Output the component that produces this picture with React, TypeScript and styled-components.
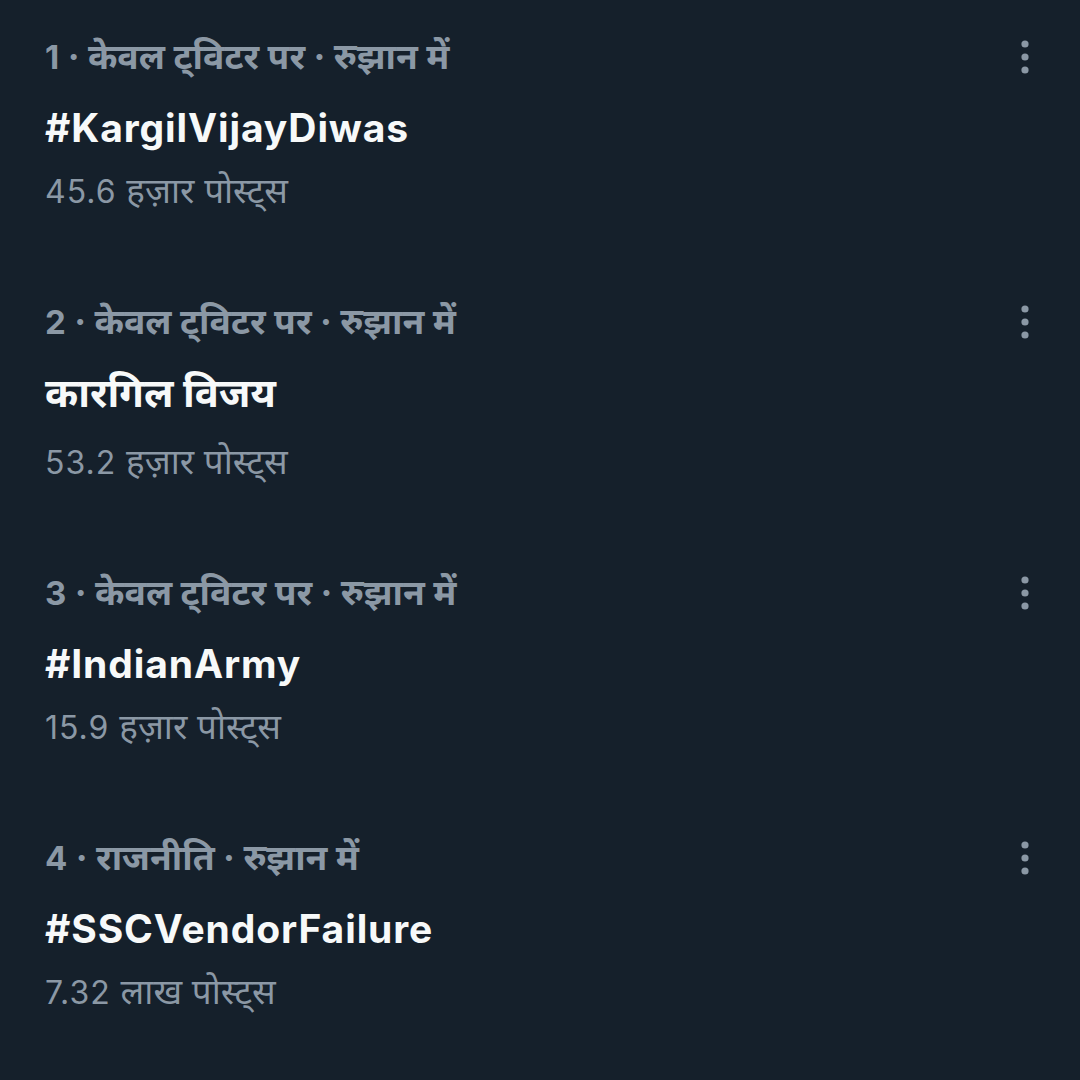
import React from "react";
import styled, { createGlobalStyle } from "styled-components";

const Global = createGlobalStyle`
  html, body { margin: 0; padding: 0; background: #15202b; }
  body { width: 1080px; height: 1080px; overflow: hidden; }
`;

const Page = styled.main`
  width: 1080px;
  height: 1080px;
  background: #15202b;
  display: flex;
  flex-direction: column;
  font-family: Inter, Roboto, "Noto Sans", "Noto Sans Devanagari", sans-serif;
`;

const Row = styled.section`
  display: flex;
  align-items: flex-start;
  justify-content: space-between;
  padding: 37px 43px 55px 45px;
`;

const Info = styled.div`
  display: flex;
  flex-direction: column;
`;

const Meta = styled.div`
  color: #8b98a5;
  font-size: 35.5px;
  font-weight: 700;
  line-height: 40px;
  height: 40px;
  white-space: nowrap;
`;

const Rank = styled.span`
  font-size: 33px;
`;

const Title = styled.div<{ $deva?: boolean }>`
  color: #f7f9f9;
  font-size: ${(p) => (p.$deva ? "40px" : "39px")};
  font-weight: 700;
  line-height: 48px;
  height: 48px;
  margin-top: 27px;
  margin-bottom: ${(p) => (p.$deva ? "6px" : "0")};
  letter-spacing: ${(p) => (p.$deva ? "0" : "0.9px")};
  white-space: nowrap;
`;

const Count = styled.div`
  color: #8b98a5;
  font-size: 35px;
  font-weight: 400;
  line-height: 40px;
  height: 40px;
  margin-top: 18px;
  white-space: nowrap;
`;

const Num = styled.span`
  font-size: 32px;
  letter-spacing: 1px;
`;

const More = styled.button`
  background: none;
  border: 0;
  padding: 0;
  width: 24px;
  height: 40px;
  display: flex;
  align-items: center;
  justify-content: center;
  color: #8b98a5;
`;

const Dots = () => (
  <svg width="8" height="34" viewBox="0 0 8 34" fill="currentColor">
    <circle cx="4" cy="4" r="3.6" />
    <circle cx="4" cy="17" r="3.6" />
    <circle cx="4" cy="30" r="3.6" />
  </svg>
);

type Trend = { rank: string; meta: string; title: string; deva?: boolean; num: string; unit: string };

const trends: Trend[] = [
  { rank: "1", meta: " · केवल ट्विटर पर · रुझान में", title: "#KargilVijayDiwas", num: "45.6", unit: " हज़ार पोस्ट्स" },
  { rank: "2", meta: " · केवल ट्विटर पर · रुझान में", title: "कारगिल विजय", deva: true, num: "53.2", unit: " हज़ार पोस्ट्स" },
  { rank: "3", meta: " · केवल ट्विटर पर · रुझान में", title: "#IndianArmy", num: "15.9", unit: " हज़ार पोस्ट्स" },
  { rank: "4", meta: " · राजनीति · रुझान में", title: "#SSCVendorFailure", num: "7.32", unit: " लाख पोस्ट्स" },
];

export default function App() {
  return (
    <Page>
      <Global />
      {trends.map((t) => (
        <Row key={t.title}>
          <Info>
            <Meta>
              <Rank>{t.rank}</Rank>
              {t.meta}
            </Meta>
            <Title $deva={t.deva}>{t.title}</Title>
            <Count>
              <Num>{t.num}</Num>
              {t.unit}
            </Count>
          </Info>
          <More aria-label="More">
            <Dots />
          </More>
        </Row>
      ))}
    </Page>
  );
}
